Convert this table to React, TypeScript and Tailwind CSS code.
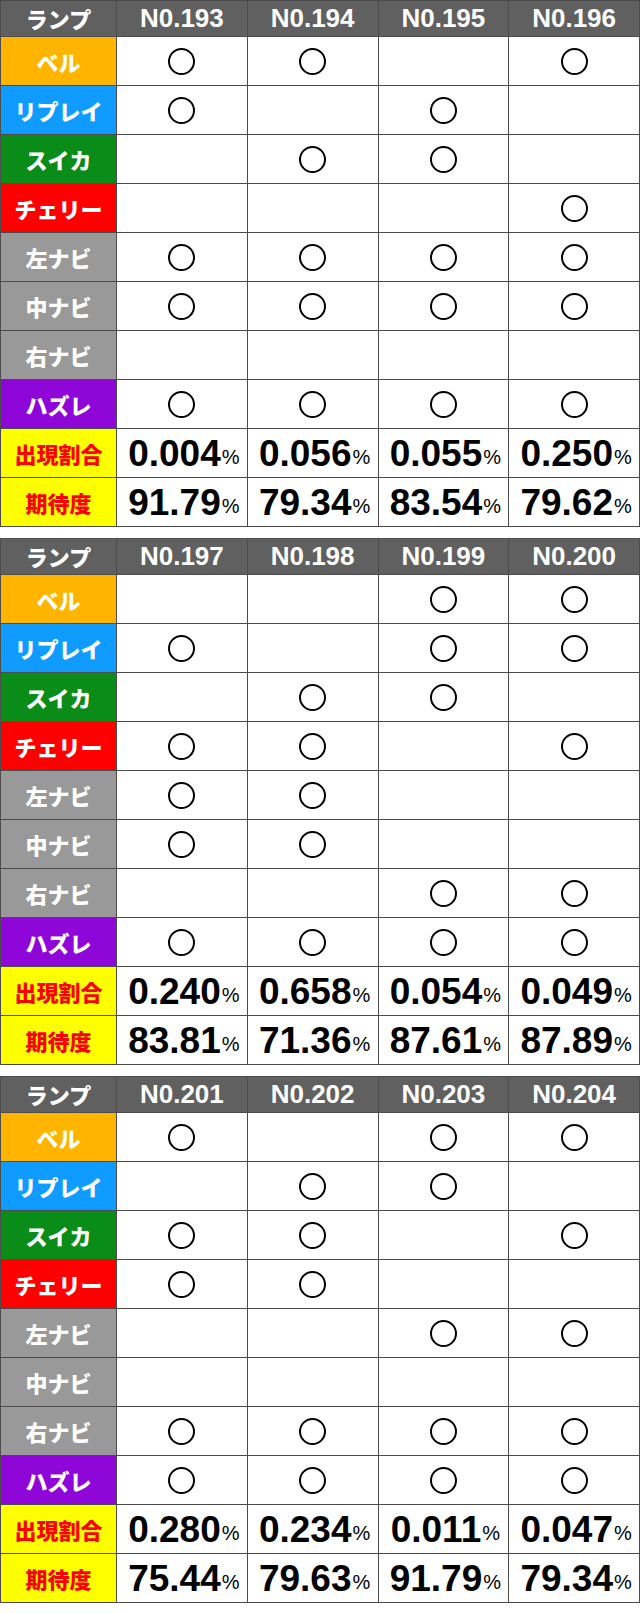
const lamps = [
  { name: 'ベル', bg: 'bg-[#ffb400]' },
  { name: 'リプレイ', bg: 'bg-[#0f9bff]' },
  { name: 'スイカ', bg: 'bg-[#0a8c18]' },
  { name: 'チェリー', bg: 'bg-[#ff0000]' },
  { name: '左ナビ', bg: 'bg-[#999999]' },
  { name: '中ナビ', bg: 'bg-[#999999]' },
  { name: '右ナビ', bg: 'bg-[#999999]' },
  { name: 'ハズレ', bg: 'bg-[#8e06d8]' },
];

interface Block {
  nos: string[];
  marks: string[];
  rate: string[];
  expect: string[];
}

const blocks: Block[] = [
  {
    nos: ['N0.193', 'N0.194', 'N0.195', 'N0.196'],
    marks: ['1101', '1010', '0110', '0001', '1111', '1111', '0000', '1111'],
    rate: ['0.004', '0.056', '0.055', '0.250'],
    expect: ['91.79', '79.34', '83.54', '79.62'],
  },
  {
    nos: ['N0.197', 'N0.198', 'N0.199', 'N0.200'],
    marks: ['0011', '1011', '0110', '1101', '1100', '1100', '0011', '1111'],
    rate: ['0.240', '0.658', '0.054', '0.049'],
    expect: ['83.81', '71.36', '87.61', '87.89'],
  },
  {
    nos: ['N0.201', 'N0.202', 'N0.203', 'N0.204'],
    marks: ['1011', '0110', '1101', '1100', '0011', '0000', '1111', '1111'],
    rate: ['0.280', '0.234', '0.011', '0.047'],
    expect: ['75.44', '79.63', '91.79', '79.34'],
  },
];

const jp = "font-['Noto_Sans_CJK_JP',sans-serif] font-black";
const num = "font-['Liberation_Sans',Arial,sans-serif] font-bold";

function Percent({ value }: { value: string }) {
  return (
    <div className="bg-white h-[48px] flex items-center justify-center pl-1">
      <span className={`${num} text-[37px] leading-none text-black`}>{value}</span>
      <span className={`${num} text-[20px] leading-none text-black self-end mb-[10px] ml-[1px] font-normal`}>%</span>
    </div>
  );
}

function Table({ block }: { block: Block }) {
  return (
    <div className="grid grid-cols-[115px_repeat(4,1fr)] gap-px p-px bg-[#4c4c4c] w-[640px]">
      <div className={`bg-[#606060] h-[35px] flex items-center justify-center text-white text-[22px] ${jp}`}>ランプ</div>
      {block.nos.map((n) => (
        <div key={n} className={`bg-[#606060] h-[35px] flex items-center justify-center text-white text-[26px] ${num}`}>
          {n}
        </div>
      ))}

      {lamps.map((lamp, i) => (
        <>
          <div key={lamp.name} className={`${lamp.bg} h-[48px] flex items-center justify-center text-white text-[22px] ${jp}`}>
            {lamp.name}
          </div>
          {block.marks[i].split('').map((m, j) => (
            <div key={`${i}-${j}`} className="bg-white h-[48px] flex items-center justify-center">
              {m === '1' && <div className="w-[27px] h-[27px] rounded-full border-2 border-black" />}
            </div>
          ))}
        </>
      ))}

      <div className={`bg-[#ffff00] h-[48px] flex items-center justify-center text-[#ff0000] text-[22px] ${jp}`}>出現割合</div>
      {block.rate.map((r, j) => (
        <Percent key={`r${j}`} value={r} />
      ))}

      <div className={`bg-[#ffff00] h-[48px] flex items-center justify-center text-[#ff0000] text-[22px] ${jp}`}>期待度</div>
      {block.expect.map((e, j) => (
        <Percent key={`e${j}`} value={e} />
      ))}
    </div>
  );
}

export default function App() {
  return (
    <div className="w-[640px] min-h-[1613px] bg-white flex flex-col gap-[11px]">
      {blocks.map((b) => (
        <Table key={b.nos[0]} block={b} />
      ))}
    </div>
  );
}
